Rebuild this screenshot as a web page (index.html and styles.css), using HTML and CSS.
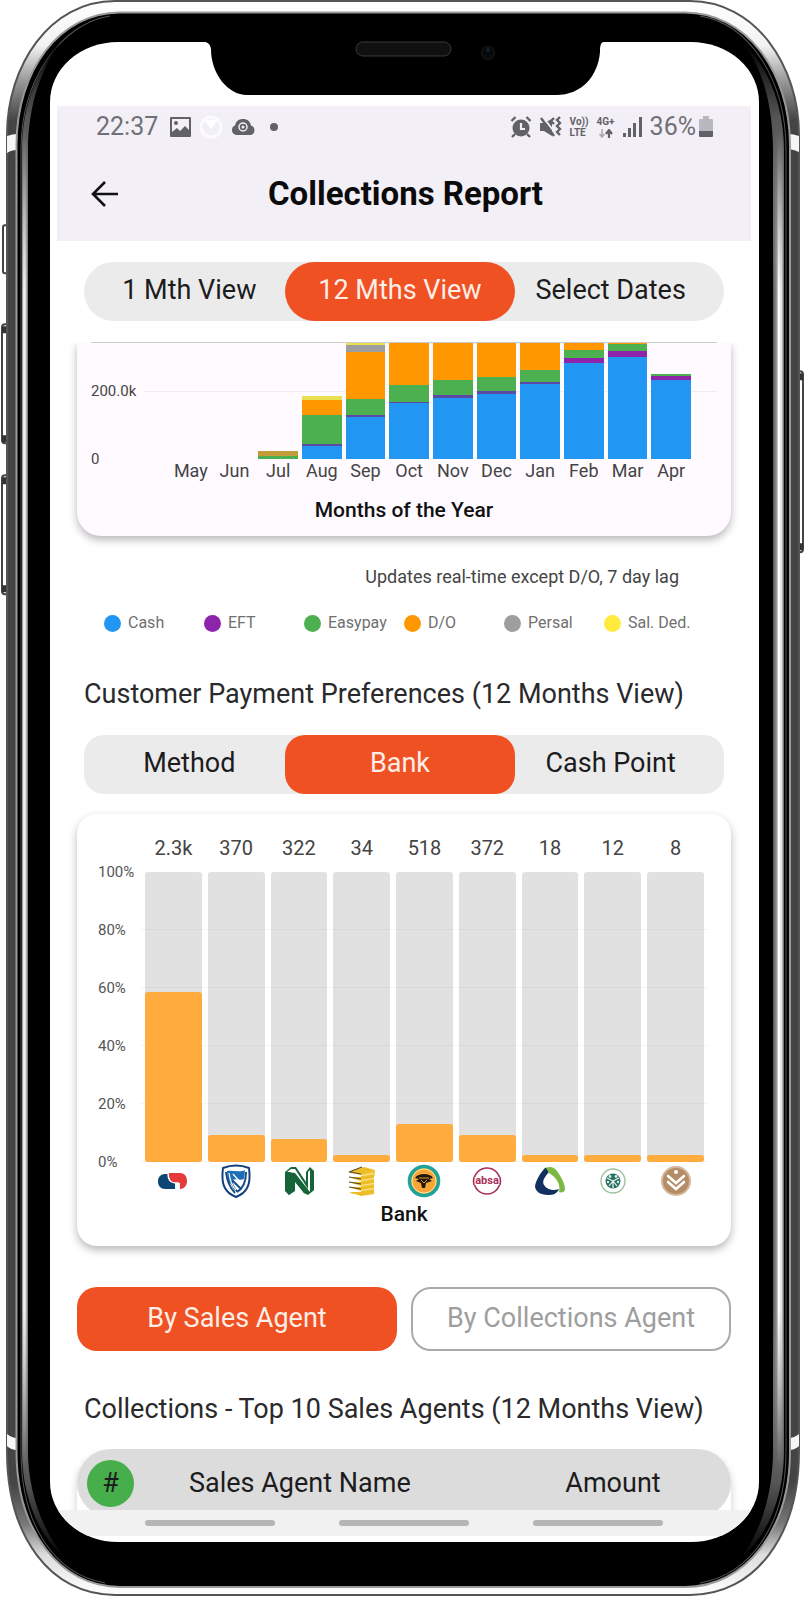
FILE: index.html
```html
<!DOCTYPE html>
<html lang="en">
<head>
<meta charset="utf-8">
<meta name="viewport" content="width=device-width, initial-scale=1">
<title>Collections Report</title>
<link rel="stylesheet" href="styles.css">
</head>
<body>
<div class="phone">
  <svg class="shell" viewBox="0 0 804 1600" preserveAspectRatio="none" aria-hidden="true">
    <defs>
      <linearGradient id="metal" x1="0" y1="0" x2="0" y2="1">
        <stop offset="0" stop-color="#fff"/><stop offset=".028" stop-color="#f2f2f2"/>
        <stop offset=".05" stop-color="#999"/><stop offset=".075" stop-color="#444"/>
        <stop offset=".93" stop-color="#444"/><stop offset=".955" stop-color="#777"/>
        <stop offset=".975" stop-color="#ddd"/><stop offset="1" stop-color="#fff"/>
      </linearGradient>
      <linearGradient id="fade" x1="0" y1="0" x2="0" y2="1">
        <stop offset="0" stop-color="#000"/><stop offset=".05" stop-color="#555"/>
        <stop offset=".14" stop-color="#888"/><stop offset=".86" stop-color="#888"/>
        <stop offset=".95" stop-color="#555"/><stop offset="1" stop-color="#000"/>
      </linearGradient>
      <linearGradient id="reveal" x1="0" y1="0" x2="0" y2="1">
        <stop offset="0" stop-color="#000"/><stop offset=".12" stop-color="#fff"/>
        <stop offset=".88" stop-color="#fff"/><stop offset="1" stop-color="#000"/>
      </linearGradient>
      <mask id="ends" maskUnits="userSpaceOnUse" x="0" y="0" width="804" height="1600"><rect y="130" width="804" height="1340" fill="url(#reveal)"/></mask>
      <linearGradient id="shineL" x1="22" x2="28" y1="0" y2="0" gradientUnits="userSpaceOnUse">
        <stop offset="0" stop-color="#777"/><stop offset=".3" stop-color="#fff"/><stop offset=".6" stop-color="#ddd"/><stop offset="1" stop-color="#666"/>
      </linearGradient>
      <linearGradient id="shineR" x1="773" x2="784" y1="0" y2="0" gradientUnits="userSpaceOnUse">
        <stop offset="0" stop-color="#555"/><stop offset=".35" stop-color="#999"/><stop offset=".5" stop-color="#fff"/><stop offset=".8" stop-color="#ddd"/><stop offset="1" stop-color="#555"/>
      </linearGradient>
    </defs>
    <g fill="#fff" stroke="#444" stroke-width="2">
      <rect x="3" y="225" width="8" height="48" rx="2"/>
      <rect x="2" y="324" width="9" height="119" rx="3"/>
      <rect x="2" y="475" width="9" height="119" rx="3"/>
      <rect x="793" y="371" width="10" height="181" rx="3"/>
    </g>
    <g fill="#333"><path d="M2 326h6v7H2zM2 435h6v7H2zM2 477h6v7H2zM2 585h6v7H2zM797 373h6v7h-6zM797 543h6v7h-6z"/></g>
    <path d="M115 1H690C755 1 799 65 799 135V1450C799 1535 755 1594 690 1594H115C50 1594 7 1535 7 1450V135C7 65 50 1 115 1Z" fill="url(#metal)" stroke="#555" stroke-width="2"/>
    <path d="M7 136q6-2 10-2v16q-6 0-10 3zM7 1433q5 4 10 4v12q-6 0-10-4zM799 136q-6-2-10-2v15q6 1 10 3zM799 1433q-5 4-10 4v12q6 0 10-4z" fill="#f6f6f6"/>
    <path d="M120 12.500H685C745 12.500 790 70 790 145V1450C790 1530 745 1586 685 1586H120C60 1586 16.500 1530 16.500 1450V145C16.500 70 60 12.500 120 12.500Z" fill="#000" stroke="#999" stroke-width="2"/>
    <path d="M110 16C60 24 21 80 21 150V1450C21 1525 55 1573 105 1582" fill="none" stroke="#555"/>
    <path d="M700 16C750 24 786 80 786 150V1450C786 1525 750 1573 700 1582" fill="none" stroke="#555"/>
    <path d="M62 40C38 66 22 105 22 150V1450C22 1495 38 1535 66 1558C42 1530 28 1490 28 1450V150C28 105 42 66 62 40Z" fill="url(#fade)"/>
    <path d="M742 42C768 66 784 105 784 150V1450C784 1495 768 1535 740 1558C762 1530 773 1490 773 1450V150C773 105 762 66 742 42Z" fill="url(#fade)"/>
    <g mask="url(#ends)">
      <rect x="22" y="130" width="6" height="1340" fill="url(#shineL)"/>
      <rect x="773" y="130" width="11" height="1340" fill="url(#shineR)"/>
    </g>
  </svg>

  <div class="screen">
    <header class="top">
      <div class="status">
        <span class="clock">22:37</span>
        <svg width="21" height="20" viewBox="0 0 21 20"><path fill="#626167" fill-rule="evenodd" d="M1 0h19a1 1 0 0 1 1 1v18a1 1 0 0 1-1 1H1a1 1 0 0 1-1-1V1a1 1 0 0 1 1-1zM2 2v13l5-4 3 3 5-5 4 4V2zM6 4a2 2 0 1 1 0 4 2 2 0 0 1 0-4z"/></svg>
        <svg width="24" height="24" viewBox="0 0 24 24"><circle cx="12" cy="12" r="10" fill="none" stroke="#fbfbfd" stroke-width="3"/><path d="M5 5h14l-7 9z" fill="#fff"/></svg>
        <svg width="25" height="18" viewBox="0 0 25 18"><path fill="#626167" d="M5 17a5 5 0 0 1-1-9.500C5 3 8 1 12 1s7 2 8 6.500a5 5 0 0 1 0 9.500z"/><circle cx="12" cy="9" r="4" fill="none" stroke="#f2eff7" stroke-width="1.500"/><circle cx="12" cy="9" r="1.500" fill="#f2eff7"/></svg>
        <svg width="24" height="10" viewBox="0 0 24 10"><circle cx="10" cy="5" r="4" fill="#626167"/></svg>
        <span class="spacer"></span>
        <svg width="22" height="22" viewBox="0 0 22 22"><circle cx="11" cy="12" r="8.500" fill="#626167"/><path d="M11 7v6h4" fill="none" stroke="#f2eff7" stroke-width="2.200"/><path d="M1.500 5l4-4M16.500 1l4 4M5 18l-3 3M17 18l3 3" stroke="#626167" stroke-width="2.400"/></svg>
        <svg width="22" height="22" viewBox="0 0 22 22"><path fill="#626167" d="M0 7h4l8-4v17l-8-5H0z"/><path d="M2 0l14 18" stroke="#f2eff7" stroke-width="2"/><path d="M1 2l13 18" stroke="#626167" stroke-width="2.400"/><path d="M14 2l-3 3 3 3M20 1l-3 3 3 3-3 3 3 3-3 3 3 3" fill="none" stroke="#626167" stroke-width="2.400"/></svg>
        <span class="mini">Vo))<br>LTE</span>
        <span class="mini">4G+<svg width="16" height="9" viewBox="0 0 16 9"><path d="M4 0v8M1.500 5L4 8l2.500-3" stroke="#a9a7ae" stroke-width="1.500" fill="none"/><path d="M11 9V2M8 5l3-4 3 4" stroke="#626167" stroke-width="2.200" fill="none"/></svg></span>
        <svg width="19" height="20" viewBox="0 0 19 20"><path fill="#626167" d="M0 16h3v4H0zM5 11h3v9H5zM10 6h3v14h-3zM16 0h3v20h-3z"/></svg>
        <span class="power"><span class="percent">36%</span>
        <svg width="14" height="22" viewBox="0 0 14 22"><path fill="#b9b8be" d="M4 0h6v3h3a1 1 0 0 1 1 1v11H0V4a1 1 0 0 1 1-1h3z"/><path fill="#626167" d="M0 15h14v5a1 1 0 0 1-1 1H1a1 1 0 0 1-1-1z"/></svg></span>
      </div>
      <div class="appbar">
        <button class="back" aria-label="Back"><svg width="28" height="28" viewBox="0 0 28 28"><path d="M27 14H2M14 2L2 14l12 12" fill="none" stroke="#111" stroke-width="2.600"/></svg></button>
        <h1>Collections Report</h1>
      </div>
    </header>

    <main>
      <div class="segments pill">
        <button>1 Mth View</button>
        <button class="active" aria-pressed="true">12 Mths View</button>
        <button>Select Dates</button>
      </div>

      <div class="clip">
        <section class="card months">
          <div class="stack-chart">
            <div class="scale"><span>200.0k</span><span>0</span></div>
            <div class="stacks">
              <div class="stack"></div>
              <div class="stack"></div>
              <div class="stack"><i class="mixed" style="height:5px"></i><i class="easypay" style="height:3px"></i></div>
              <div class="stack"><i class="salded" style="height:4px"></i><i class="debit" style="height:15px"></i><i class="easypay" style="height:29px"></i><i class="thin" style="height:2px"></i><i class="cash" style="height:13px"></i></div>
              <div class="stack"><i class="salded" style="height:2px"></i><i class="persal" style="height:7px"></i><i class="debit" style="height:47px"></i><i class="easypay" style="height:16px"></i><i class="thin" style="height:2px"></i><i class="cash" style="height:42px"></i></div>
              <div class="stack"><i class="debit" style="height:42px"></i><i class="easypay" style="height:17px"></i><i class="thin" style="height:1px"></i><i class="cash" style="height:56px"></i></div>
              <div class="stack"><i class="debit" style="height:37px"></i><i class="easypay" style="height:15px"></i><i class="thin" style="height:3px"></i><i class="cash" style="height:61px"></i></div>
              <div class="stack"><i class="debit" style="height:34px"></i><i class="easypay" style="height:14px"></i><i class="thin" style="height:3px"></i><i class="cash" style="height:65px"></i></div>
              <div class="stack"><i class="debit" style="height:27px"></i><i class="easypay" style="height:12px"></i><i class="thin" style="height:2px"></i><i class="cash" style="height:75px"></i></div>
              <div class="stack"><i class="debit" style="height:7px"></i><i class="easypay" style="height:8px"></i><i class="eft" style="height:5px"></i><i class="cash" style="height:96px"></i></div>
              <div class="stack"><i class="debit" style="height:1px"></i><i class="easypay" style="height:7px"></i><i class="eft" style="height:6px"></i><i class="cash" style="height:102px"></i></div>
              <div class="stack"><i class="easypay" style="height:2px"></i><i class="eft" style="height:4px"></i><i class="cash" style="height:79px"></i></div>
            </div>
          </div>
          <div class="month-names"><span>May</span><span>Jun</span><span>Jul</span><span>Aug</span><span>Sep</span><span>Oct</span><span>Nov</span><span>Dec</span><span>Jan</span><span>Feb</span><span>Mar</span><span>Apr</span></div>
          <h3>Months of the Year</h3>
        </section>
      </div>

      <p class="note">Updates real-time except D/O, 7 day lag</p>
      <ul class="legend">
        <li><i class="cash"></i>Cash</li>
        <li><i class="eft"></i>EFT</li>
        <li><i class="easypay"></i>Easypay</li>
        <li><i class="debit"></i>D/O</li>
        <li><i class="persal"></i>Persal</li>
        <li><i class="yellow"></i>Sal. Ded.</li>
      </ul>

      <h2>Customer Payment Preferences (12 Months View)</h2>
      <div class="segments soft">
        <button>Method</button>
        <button class="active" aria-pressed="true">Bank</button>
        <button>Cash Point</button>
      </div>

      <section class="card banks">
        <div class="nine counts"><span>2.3k</span><span>370</span><span>322</span><span>34</span><span>518</span><span>372</span><span>18</span><span>12</span><span>8</span></div>
        <div class="axis"><span>100%</span><span>80%</span><span>60%</span><span>40%</span><span>20%</span><span>0%</span></div>
        <div class="nine bars">
          <div><i style="height:170px"></i></div>
          <div><i style="height:27px"></i></div>
          <div><i style="height:23px"></i></div>
          <div><i style="height:7px"></i></div>
          <div><i style="height:38px"></i></div>
          <div><i style="height:27px"></i></div>
          <div><i style="height:7px"></i></div>
          <div><i style="height:7px"></i></div>
          <div><i style="height:7px"></i></div>
        </div>
        <div class="nine logos">
          <svg viewBox="0 0 34 34"><path fill="#0d4673" d="M9 10h6c-1 3 1 6 4 8v7H9c-5 0-7-4-7-7.500S4 10 9 10z"/><path fill="#e63a3d" d="M13 9h11c5 0 7 4 7 8s-2 7-6 8h-1v-6h-6c-5 0-6-6-5-10z"/><path d="M12 9c0 6 2 10 7 10h3v7" fill="none" stroke="#fff" stroke-width="1.500"/><path fill="#0d4673" d="M12 17l7 3v5h-7z"/></svg>
          <svg viewBox="0 0 34 34"><path fill="#fff" stroke="#123f7d" stroke-width="2" d="M4 4c8-3 18-3 26 0 1 8 1 15-2 20-2 4-6 7-11 9-5-2-9-5-11-9C3 19 3 12 4 4z"/><path fill="#1c6eb7" d="M8 7c6-1 12 2 18-1l-1 9c-4 2-8-1-12 1l-2 5C9 17 8 12 8 7z"/><path fill="none" stroke="#174d87" stroke-width="2" d="M7 8c1 9 3 15 9 21M12 16c1 5 3 9 7 12M27 8c0 9-2 16-9 20M13 16l9 9"/><path fill="none" stroke="#fff" stroke-width="1.200" d="M10 9c1 7 3 13 7 17M14 10l7 8"/></svg>
          <svg viewBox="0 0 34 34"><path fill="#16643a" d="M3 8l6-5h5l10 15V8l4-5 4 4v19l-6 5-4-2-9-12v8l-6 6-4-4z"/><path fill="#fff" d="M5 8l4-3h4l13 20V8l2-2v22L13 9z"/><path fill="#16643a" d="M3 8h5l18 22-4-1-9-11v9l-6 4-4-5zM28 6l4 1v19l-4 3z"/></svg>
          <svg viewBox="0 0 34 34"><path fill="#f0c430" d="M16 10l14-4v5l-1 1v4l-1 1 1 1v4l-1 1 1 1v4l-1 2H10L4 29l12-1z"/><g fill="#edbd28"><path d="M4 8l15-5 11 3-14 5z"/><path d="M4 13h12l13-2v4l-13 2z"/><path d="M4 18h12l13-2v4l-13 2z"/><path d="M4 23h12l13-2v4l-13 2z"/><path d="M4 28h12l13-2v4l-13 2z"/></g><g stroke="#58491b" stroke-width="1.100"><path d="M4 8l12 2M4 13l12 2M4 18l12 2M4 23l12 2M4 8l13-5"/></g><path d="M16 11.500l14-2M16 16.500l13-2M16 21.500l13-2M16 26.500l13-2" stroke="#fff4bd" stroke-width=".8"/></svg>
          <svg viewBox="0 0 34 34"><circle cx="17" cy="17" r="14.500" fill="#f7a536" stroke="#1fa29a" stroke-width="3.600"/><circle cx="17" cy="17" r="12" fill="none" stroke="#f8e6a0"/><path fill="#20180d" d="M8 14c2-3 5-4 9-4s7 1 9 4l-4 1 3 2-6 2-1 5h-3l-1-5-5-2 3-2z"/><path stroke="#f7a536" fill="none" stroke-width=".9" d="M12 14h10M14 16l3 3 3-3"/></svg>
          <svg viewBox="0 0 34 34"><circle cx="17" cy="17" r="13" fill="#fff" stroke="#a82e57" stroke-width="1.600"/><path fill="#fff" d="M2 13h30v8H2z"/><text x="17" y="20" text-anchor="middle" class="absa">absa</text><path d="M4 13q-1 4 0 8M30 13q1 4 0 8" fill="none" stroke="#a82e57" stroke-width="1.600"/></svg>
          <svg viewBox="0 0 34 34"><path fill="#12305d" d="M12 4c3-1 5 1 4 4-5 6-7 9-5 13 3 5 10 6 15 4-2 5-6 6-11 6C7 31 2 27 2 22 3 16 8 8 12 4z"/><path fill="#7db843" d="M13 4c4-2 8-1 11 3 4 6 8 12 8 18 0 3-3 4-6 3 2-8-3-15-10-19z"/></svg>
          <svg viewBox="0 0 34 34"><circle cx="17" cy="17" r="12" fill="#fff" stroke="#9bc3a1" stroke-width="1.400"/><circle cx="17" cy="17" r="7.500" fill="#287264"/><path stroke="#eef7f2" stroke-width="1.200" fill="none" d="M17 17v7M17 17l-6-3M17 17l6-3M17 17l-4 5M17 17l4 5"/><g fill="#dceee6"><circle cx="14" cy="12.500" r="1.400"/><circle cx="20" cy="12.500" r="1.400"/><circle cx="12" cy="18" r="1.200"/><circle cx="22" cy="18" r="1.200"/></g></svg>
          <svg viewBox="0 0 34 34"><circle cx="17" cy="17" r="14" fill="#b48c66" stroke="#d5b69a" stroke-width="2"/><circle cx="17" cy="8" r="2" fill="#fff"/><path d="M9 12l8 7 8-7M9 18l8 7 8-7" fill="none" stroke="#fff" stroke-width="2.600" stroke-linecap="round"/></svg>
        </div>
        <h3>Bank</h3>
      </section>

      <div class="agent-tabs">
        <button class="primary">By Sales Agent</button>
        <button class="outline">By Collections Agent</button>
      </div>

      <h2>Collections - Top 10 Sales Agents (12 Months View)</h2>
      <div class="peek">
        <div class="sheet">
          <table>
            <thead><tr><th class="rank"><span>#</span></th><th class="name">Sales Agent Name</th><th class="amount">Amount</th></tr></thead>
          </table>
        </div>
      </div>
    </main>
    <nav class="gestures" aria-label="System navigation"><button aria-label="Recent"></button><button aria-label="Home"></button><button aria-label="Back"></button></nav>
  </div>

  <svg class="notch" viewBox="0 0 400 58" aria-hidden="true">
    <path d="M0 0V2C4 2 6 4 7 9C7 34 24 55 43 55H352C378 55 394 36 396 12C396 5 397 2 400 2V0Z" fill="#000"/>
    <rect x="152" y="2" width="95" height="14" rx="7" fill="#101010" stroke="#3a3a3a"/>
    <circle cx="284" cy="13" r="6.500" fill="#070a0c" stroke="#1d1d1d"/><circle cx="284" cy="10" r="2" fill="#10222b"/>
  </svg>
</div>
</body>
</html>
```

FILE: styles.css
```css
* { box-sizing: border-box; }
body { margin: 0; background: #fff; font-family: Roboto, "Liberation Sans", sans-serif; color: #1c1c1e; }
button { font: inherit; color: inherit; border: 0; background: none; padding: 0; }
h1, h2, h3, p, ul { margin: 0; padding: 0; }
svg { display: block; flex: none; }

.phone { position: relative; padding: 42px 45px 59px 50px; }
.shell { position: absolute; left: 0; top: 0; width: 100%; height: 100%; }
.notch { position: absolute; left: 50%; top: 40px; width: 400px; height: 58px; margin-left: -198px; }
.screen { position: relative; background: #fff; overflow: hidden; border-radius: 68px / 60px; padding: 64px 8px 6px 7px; }

.top { background: #f2eff7; padding-bottom: 12px; }
.status { display: flex; align-items: center; gap: 8px; height: 42px; padding: 0 38px 0 39px; color: #626167; }
.clock, .percent { font-size: 25px; line-height: 42px; color: #707076; }
.clock { margin-right: 4px; }
.spacer { flex: 1; }
.mini { font-size: 10px; line-height: 11px; font-weight: 700; }
.mini svg { margin: 2px auto 0; }
.power { display: flex; align-items: center; gap: 3px; }
.appbar { display: grid; grid-template-columns: 56px 1fr 56px; align-items: center; height: 81px; padding: 10px 17px 0 20px; }
.back { display: grid; place-items: center; height: 56px; }
h1 { font-size: 33px; line-height: 40px; font-weight: 700; text-align: center; color: #0b0b0c; white-space: nowrap; }

main { padding: 21px 20px 0; }
.segments { display: grid; grid-template-columns: repeat(3, 1fr); margin: 0 7px; padding-right: 8px; height: 59px; background: #ebebeb; font-size: 27px; }
.segments button { padding-bottom: 3px; }
.segments .active { margin: 0 -10px; background: #f05123; color: #fdeee8; border-radius: inherit; }
.segments.pill { border-radius: 30px; }
.segments.soft { border-radius: 20px; }

.clip { margin-top: 21px; clip-path: inset(0 -20px -30px -20px); }
.card { background: #fff; box-shadow: 0 4px 8px rgba(0, 0, 0, .28); }
.months { background: #fefaff; border-radius: 0 0 24px 24px; padding: 0 14px 12px; }
.stack-chart { position: relative; display: grid; grid-template-columns: 80px 1fr; border-top: 1px solid #ccc; padding-right: 26px; height: 117px;
  background: linear-gradient(#f3ebf1, #f3ebf1) 53px 48px / 100% 1px no-repeat; }
.scale { display: flex; flex-direction: column; justify-content: space-between; padding-top: 38px; margin-bottom: -10px; font-size: 15px; line-height: 20px; color: #444; }
.stacks, .month-names { display: grid; grid-template-columns: repeat(12, 1fr); gap: 4px; }
.stack { display: flex; flex-direction: column; justify-content: flex-end; }
.stack i { display: block; flex: none; }
.month-names { margin: 0 26px 0 80px; font-size: 18px; line-height: 24px; color: #444; text-align: center; }
.month-names span { justify-self: center; }
h3 { font-size: 21px; line-height: 28px; font-weight: 500; text-align: center; color: #111; }
.months h3 { margin-top: 13px; }

.cash { background: #2196f3; }
.eft { background: #8e24aa; }
.thin { background: #5c49a6; }
.easypay { background: #4caf50; }
.debit { background: #ff9800; }
.persal { background: #9e9e9e; }
.salded { background: #e6e052; }
.yellow { background: #ffeb3b; }
.mixed { background: #c39c39; }

.note { margin: 29px 52px 0 0; text-align: right; font-size: 18px; line-height: 24px; color: #444; }
.legend { list-style: none; display: grid; grid-template-columns: repeat(6, 1fr); margin: 22px 27px 0; font-size: 16px; line-height: 24px; color: #707070; }
.legend li { display: flex; align-items: center; gap: 7px; white-space: nowrap; }
.legend i { width: 17px; height: 17px; border-radius: 50%; flex: none; }

h2 { margin-left: 7px; font-size: 27px; line-height: 36px; font-weight: 400; color: #2a2a2c; white-space: nowrap; }
.legend + h2 { margin-top: 41px; margin-bottom: 23px; }

.banks { margin-top: 20px; border-radius: 20px; padding: 20px 27px 18px 21px; display: grid; grid-template-columns: 47px 1fr; }
.nine { grid-column: 2; display: grid; grid-template-columns: repeat(9, 1fr); gap: 6px; }
.counts { font-size: 20px; line-height: 28px; text-align: center; margin-bottom: 10px; color: #444; }
.axis { display: flex; flex-direction: column; justify-content: space-between; margin: -10px 0; font-size: 15px; line-height: 20px; color: #555; }
.bars { position: relative; height: 290px; }
.bars div { display: flex; align-items: flex-end; background: #e1e1e1; border-radius: 3px; }
.bars i { width: 100%; background: #ffab3d; border-radius: 3px; position: relative; z-index: 1; }
.bars::after { content: ""; position: absolute; inset: 0 -5px 0 -5px; background: repeating-linear-gradient(transparent 0 57px, rgba(0, 0, 0, .04) 57px 58px); }
.logos { justify-items: center; padding-top: 2px; }
.logos svg { width: 34px; height: 34px; }
.absa { font: 700 11px Roboto, sans-serif; fill: #a82e57; }
.banks h3 { grid-column: 1 / -1; margin: 2px 0 0 6px; }

.agent-tabs { display: grid; grid-template-columns: 1fr 1fr; gap: 14px; margin-top: 41px; height: 64px; font-size: 27px; }
.agent-tabs button { border-radius: 20px; padding-bottom: 2px; }
.primary { background: #f05123; color: #fdeee8; }
.outline { border: 2px solid #aaa; color: #9e9e9e; }
.agent-tabs + h2 { margin-top: 40px; margin-bottom: 22px; }

.peek { height: 61px; margin: 0 -20px; padding: 0 20px; overflow: hidden; }
.sheet { background: #fff; border-radius: 34px 34px 0 0; box-shadow: 0 4px 8px rgba(0, 0, 0, .2); }
table { width: 100%; border-collapse: separate; border-spacing: 0; background: #dcdcdc; border-radius: 34px; table-layout: fixed; }
th { height: 68px; padding: 0; font-size: 27px; font-weight: 400; text-align: center; }
.rank { width: 68px; }
.rank span { display: block; width: 47px; height: 47px; margin: 0 auto 0 10px; border-radius: 50%; background: #46ae4b; line-height: 47px; }
.name { text-align: left; padding-left: 44px; }
.amount { width: 236px; }

.gestures { display: flex; justify-content: space-between; background: #f1f1f1; padding: 10px 88px 10px; }
.gestures button { width: 130px; height: 6px; border-radius: 3px; background: #b5b5b5; }
```
